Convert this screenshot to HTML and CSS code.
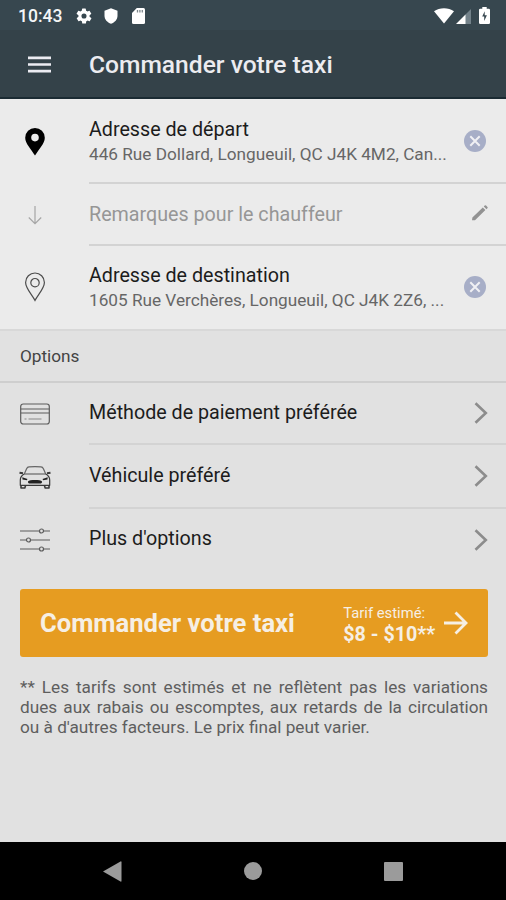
FILE: index.html
```html
<!DOCTYPE html>
<html lang="fr">
<head>
  <meta charset="UTF-8" />
  <meta name="viewport" content="width=device-width, initial-scale=1.0" />
  <title>Commander votre taxi</title>
  <link rel="stylesheet" href="styles.css">
</head>
<body>
  <div class="status-bar">
    <span class="time">10:43</span>
    <svg class="status-gear" width="18" height="18" viewBox="0 0 24 24" fill="#fff"><path d="M19.4 13a7.500 7.500 0 0 0 0-2l2.100-1.600a.5.5 0 0 0 .1-.7l-2-3.400a.5.5 0 0 0-.6-.2l-2.500 1a7.300 7.300 0 0 0-1.700-1l-.4-2.600a.5.5 0 0 0-.5-.5h-4a.5.5 0 0 0-.5.500l-.4 2.600a7.700 7.700 0 0 0-1.700 1l-2.500-1a.5.5 0 0 0-.6.200l-2 3.400a.5.5 0 0 0 .1.700L4.600 11a8 8 0 0 0 0 2l-2.100 1.600a.5.5 0 0 0-.1.700l2 3.400a.5.5 0 0 0 .6.200l2.500-1a7.300 7.300 0 0 0 1.700 1l.4 2.600a.5.5 0 0 0 .5.500h4a.5.5 0 0 0 .5-.5l.4-2.600a7.700 7.700 0 0 0 1.700-1l2.500 1a.5.5 0 0 0 .6-.2l2-3.400a.5.5 0 0 0-.1-.7zM12 15.400a3.400 3.400 0 1 1 0-6.800 3.400 3.400 0 0 1 0 6.800z"/></svg>
    <svg class="status-shield" width="14" height="16" viewBox="0 0 14 16" fill="#fff"><path d="M7 .3l6.500 2.400v5c0 3.700-2.700 6.700-6.500 8-3.800-1.300-6.500-4.300-6.500-8v-5z"/></svg>
    <svg class="status-sd" width="13" height="16" viewBox="0 0 13 16"><path fill="#fff" d="M4.800 0h6.700A1.500 1.500 0 0 1 13 1.500v13a1.500 1.500 0 0 1-1.500 1.500h-10A1.500 1.500 0 0 1 0 14.500V5z"/><path stroke="#37474f" stroke-opacity=".65" stroke-width="1.300" d="M5.500 2v2.500M7.900 2v2.500M10.300 2v2.500"/></svg>
    <span class="spacer"></span>
    <svg width="20" height="16" viewBox="0 0 20 16" fill="#fff"><path d="M10 15.500L0 3.300C5.600-.8 14.400-.8 20 3.300z"/></svg>
    <svg class="status-signal" width="15" height="15" viewBox="0 0 15 15"><path fill="#73828a" d="M15 0v15H9V6z"/><path fill="#fff" d="M0 15l9.500-9.500V15z"/></svg>
    <svg class="status-battery" width="11" height="17" viewBox="0 0 11 17"><path fill="#fff" d="M3.300 0h4.400v1.700h2A1.300 1.300 0 0 1 11 3v12.700a1.300 1.300 0 0 1-1.300 1.300H1.300A1.300 1.300 0 0 1 0 15.700V3a1.300 1.300 0 0 1 1.300-1.300h2z"/><path fill="#37474f" d="M5.700 4.300L3.200 9.500h2v4.500l2.700-5.700H5.700z"/></svg>
  </div>

  <header class="app-bar">
    <svg class="menu" width="23" height="17" viewBox="0 0 23 17"><path stroke="#ececf2" stroke-width="2.700" d="M0 1.800h23M0 8.500h23M0 15.200h23"/></svg>
    <h1>Commander votre taxi</h1>
  </header>

  <main>
    <section class="addresses">
      <div class="row row-from">
        <div class="icon">
          <svg width="20" height="28" viewBox="0 0 20 28"><path fill="#000" fill-rule="evenodd" d="M10 0a9.800 9.800 0 0 1 9.800 9.800C19.800 15.500 14 21 10 27.600 6 21 .2 15.500.2 9.800A9.800 9.800 0 0 1 10 0zm0 5.800a3.800 3.800 0 1 0 0 7.600 3.800 3.800 0 0 0 0-7.600z"/></svg>
        </div>
        <div class="content">
          <div class="text">
            <p class="label">Adresse de départ</p>
            <p class="address">446 Rue Dollard, Longueuil, QC J4K 4M2, Can...</p>
          </div>
          <svg class="clear" width="22" height="22" viewBox="0 0 22 22"><circle cx="11" cy="11" r="11" fill="#a7aec7"/><path stroke="#f0f0f4" stroke-width="2" d="M6.300 6.300l9.400 9.400M15.700 6.300l-9.400 9.400"/></svg>
        </div>
      </div>
      <div class="row row-note">
        <div class="icon">
          <svg width="14" height="19" viewBox="0 0 14 19"><path fill="none" stroke="#a6a6a6" stroke-width="1.200" d="M7 0v17.500M.8 11.500L7 17.700l6.200-6.200"/></svg>
        </div>
        <div class="content">
          <p class="label muted">Remarques pour le chauffeur</p>
          <svg class="pencil" width="16" height="16" viewBox="0 0 16 16" fill="#929292"><path d="M0 15.200l.4-2.700L10.800 2.500 13.400 5.100 3 15.200zM11.800 1.500l.9-.9a1 1 0 0 1 1.400 0l1.300 1.300a1 1 0 0 1 0 1.400l-.9.900z"/></svg>
        </div>
      </div>
      <div class="row row-to">
        <div class="icon">
          <svg width="20" height="30" viewBox="0 0 20 30"><g fill="none" stroke="#4c4c4c" stroke-width="1.200"><path d="M10 1a9.400 9.400 0 0 1 9.400 9.400c0 5.600-5.800 11.500-9.400 18-3.600-6.500-9.400-12.400-9.400-18A9.400 9.400 0 0 1 10 1z"/><circle cx="10" cy="10.700" r="4.200"/></g></svg>
        </div>
        <div class="content">
          <div class="text">
            <p class="label">Adresse de destination</p>
            <p class="address">1605 Rue Verchères, Longueuil, QC J4K 2Z6, ...</p>
          </div>
          <svg class="clear" width="22" height="22" viewBox="0 0 22 22"><circle cx="11" cy="11" r="11" fill="#a7aec7"/><path stroke="#f0f0f4" stroke-width="2" d="M6.300 6.300l9.400 9.400M15.700 6.300l-9.400 9.400"/></svg>
        </div>
      </div>
    </section>

    <h2 class="section-title">Options</h2>

    <section class="options">
      <div class="row option">
        <div class="icon">
          <svg width="30" height="22" viewBox="0 0 30 22"><g fill="none" stroke="#5c5c5c" stroke-width="1.200"><rect x=".7" y="1" width="28.600" height="20" rx="2.500"/><path d="M.7 6h28.600M.7 10h28.600"/><path stroke="#8a8a8a" d="M4.500 16h2M8.500 16h13"/></g></svg>
        </div>
        <div class="content">
          <p class="label">Méthode de paiement préférée</p>
          <svg class="chevron" width="14" height="22" viewBox="0 0 14 22"><path fill="none" stroke="#8c8c8c" stroke-width="2.600" d="M1.500 1.200l10.300 9.800L1.500 20.800"/></svg>
        </div>
      </div>
      <div class="row option option-vehicle">
        <div class="icon">
          <svg width="32" height="23" viewBox="0 0 32 23"><g fill="none" stroke="#3a3a3a" stroke-width="1.200" stroke-linejoin="round"><path stroke="#666" d="M5.300 8L7.600 2.700C8.200 1.400 8.800 1 10 .9c4-.4 8-.4 12 0 1.200.1 1.800.5 2.400 1.800L26.700 8"/><path stroke="#666" d="M5.300 8h21.400"/><path d="M5.300 8C2.600 9.500 1.300 11 1.300 14v5.300h29.400V14c0-3-1.300-4.500-4-6"/><path stroke-width="1.600" d="M2 19.300V22h3.800l.8-2.400M30 19.300V22h-3.800l-.8-2.400"/><path stroke-width="2" d="M.5 6.700l3.500.6M31.500 6.700l-3.500.6"/></g><path fill="#222" d="M3.300 11.300l5.200 1.600-.7 1.300-4.300-.8zM28.700 11.300l-5.200 1.600.7 1.300 4.300-.8zM9 15.400c1.200-1.800 12.800-1.800 14 0 .4.900-.8 2.200-1.800 2.200H10.800c-1 0-2.200-1.300-1.800-2.200z"/></svg>
        </div>
        <div class="content">
          <p class="label">Véhicule préféré</p>
          <svg class="chevron" width="14" height="22" viewBox="0 0 14 22"><path fill="none" stroke="#8c8c8c" stroke-width="2.600" d="M1.500 1.200l10.300 9.800L1.500 20.800"/></svg>
        </div>
      </div>
      <div class="row option option-more">
        <div class="icon">
          <svg width="30" height="24" viewBox="0 0 30 24"><g fill="none" stroke="#5c5c5c" stroke-width="1.200"><path d="M0 3h19.500M23.500 3H30M0 12h6.500M10.500 12H30M0 21h19.500M23.500 21H30"/><circle cx="21.500" cy="3" r="2"/><circle cx="8.500" cy="12" r="2"/><circle cx="21.500" cy="21" r="2"/></g></svg>
        </div>
        <div class="content">
          <p class="label">Plus d'options</p>
          <svg class="chevron" width="14" height="22" viewBox="0 0 14 22"><path fill="none" stroke="#8c8c8c" stroke-width="2.600" d="M1.500 1.200l10.300 9.800L1.500 20.800"/></svg>
        </div>
      </div>
    </section>

    <button class="order-btn" type="button">
      <span class="order-label">Commander votre taxi</span>
      <span class="fare">
        <span class="fare-title">Tarif estimé:</span>
        <span class="fare-price">$8 - $10**</span>
      </span>
      <svg class="arrow" width="24" height="24" viewBox="0 0 24 24"><path fill="none" stroke="#f6efe4" stroke-width="2.800" d="M0 12h22M11.500 1.500L22 12 11.500 22.500"/></svg>
    </button>

    <p class="disclaimer">** Les tarifs sont estimés et ne reflètent pas les variations dues aux rabais ou escomptes, aux retards de la circulation ou à d'autres facteurs. Le prix final peut varier.</p>
  </main>

  <footer class="nav-bar">
    <svg width="19" height="21" viewBox="0 0 19 21"><path fill="#9b9b9b" d="M0 10.500L17.500.4q1-.4 1 .8v18.600q0 1.200-1 .8z"/></svg>
    <svg width="18" height="18" viewBox="0 0 18 18"><circle cx="9" cy="9" r="9" fill="#9b9b9b"/></svg>
    <svg width="19" height="19" viewBox="0 0 19 19"><rect width="19" height="19" rx="1" fill="#9b9b9b"/></svg>
  </footer>
</body>
</html>
```

FILE: styles.css
```css
* {
  margin: 0;
  padding: 0;
  box-sizing: border-box;
}

body {
  display: flex;
  flex-direction: column;
  height: 900px;
  font-family: Roboto, "Liberation Sans", sans-serif;
  background: #e1e1e1;
  color: #1c1c1c;
  overflow: hidden;
}

svg {
  display: block;
  flex-shrink: 0;
}

/* Status bar */
.status-bar {
  display: flex;
  align-items: center;
  height: 30px;
  padding: 1px 16px 0 18px;
  background: #37474f;
}

.time {
  width: 57px;
  font-size: 17.5px;
  font-weight: 500;
  color: #f4f6f7;
}

.status-shield {
  margin-left: 11px;
}

.status-sd {
  margin-left: 14px;
}

.spacer {
  flex: 1;
}

.status-signal {
  margin: 2px 8px 0 2px;
}

/* App bar */
.app-bar {
  display: flex;
  align-items: center;
  height: 69px;
  padding: 2px 0 0 28px;
  background: #344249;
  border-bottom: 2px solid #1b2b33;
}

.app-bar h1 {
  margin-left: 38px;
  font-size: 24.6px;
  font-weight: 500;
  color: #ececf0;
}

main {
  flex: 1;
}

/* Rows */
.addresses {
  background: #ebebeb;
  border-bottom: 2px solid #d8d8d8;
}

.row {
  display: flex;
}

.icon {
  display: flex;
  align-items: center;
  justify-content: center;
  width: 70px;
  margin-right: 19px;
}

.content {
  display: flex;
  flex: 1;
  align-items: center;
  justify-content: space-between;
  border-bottom: 2px solid #d3d3d3;
}

.row-from {
  height: 85px;
}

.row-note {
  height: 62px;
}

.row-to {
  height: 83px;
  padding-bottom: 2px;
}

.row-to .content,
.option-more .content {
  border-bottom: none;
}

.label {
  font-size: 19.7px;
  line-height: 26px;
  white-space: nowrap;
}

.text .label {
  padding-top: 1px;
  margin-bottom: -1px;
}

.muted {
  padding-top: 1px;
  color: #969696;
}

.address {
  font-size: 17.2px;
  line-height: 24px;
  color: #666;
  white-space: nowrap;
}

.clear {
  margin-right: 20px;
}

.pencil {
  margin: 0 18px 2px 0;
}

.chevron {
  margin-right: 18px;
}

/* Options */
.section-title {
  height: 52px;
  padding-left: 20px;
  font-size: 17.2px;
  font-weight: 400;
  line-height: 50px;
  color: #444;
  border-bottom: 2px solid #cecece;
}

.option {
  height: 62px;
}

.option-vehicle {
  height: 64px;
}

.option-more {
  height: 61px;
}

.option-more .label {
  padding-bottom: 2px;
}

/* Order button */
.order-btn {
  display: flex;
  align-items: center;
  width: 468px;
  height: 68px;
  margin: 19px 0 0 20px;
  padding: 0 20px;
  border: none;
  border-radius: 3px;
  background: #e69c21;
  color: #f6efe4;
  font-family: inherit;
  text-align: left;
}

.order-label {
  width: 304px;
  font-size: 25.6px;
  font-weight: 700;
  white-space: nowrap;
}

.fare {
  display: flex;
  flex-direction: column;
  width: 101px;
  padding-top: 3px;
  white-space: nowrap;
}

.fare-title {
  font-size: 14.8px;
  line-height: 20px;
}

.fare-price {
  font-size: 19.7px;
  font-weight: 700;
  line-height: 23px;
}

.disclaimer {
  margin: 20px 18px 0 20px;
  font-size: 17.2px;
  line-height: 20px;
  color: #5e5e5e;
  text-align: justify;
}

/* Android navigation */
.nav-bar {
  display: flex;
  align-items: center;
  justify-content: space-between;
  height: 58px;
  padding: 0 103px;
  background: #000;
}
```
